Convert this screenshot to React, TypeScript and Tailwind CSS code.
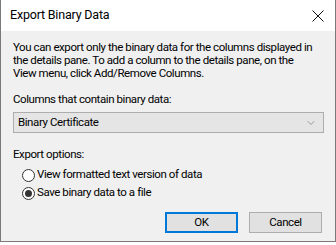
import { ChevronDown } from "lucide-react";

function Radio({ checked, label }: { checked?: boolean; label: string }) {
  return (
    <label className="flex h-[18px] items-center">
      <span className="flex h-[13px] w-[13px] items-center justify-center rounded-full border border-[#333] bg-white">
        {checked && <span className="h-[7px] w-[7px] rounded-full bg-[#333]" />}
      </span>
      <span className="ml-[2px]">{label}</span>
    </label>
  );
}

export default function App() {
  return (
    <div className="h-[245px] w-[336px] bg-white font-['Roboto',Arial,sans-serif] text-[11.5px] tracking-[-0.42px] text-black">
      <div className="flex h-[242px] flex-col border-x border-b border-[#7a7a7a]">
        <div className="flex h-[31px] items-center justify-between bg-white pl-[9px] pr-[10px]">
          <span className="text-[12.5px] tracking-[-0.2px]">Export Binary Data</span>
          <svg width="12" height="12" viewBox="0 0 12 12" className="mr-[1px]">
            <path d="M0.5 0.5 L11.5 11.5 M11.5 0.5 L0.5 11.5" stroke="#111" strokeWidth="1" />
          </svg>
        </div>
        <div className="flex flex-1 flex-col bg-[#f0f0f0] px-[12px] pt-[10px]">
          <p className="whitespace-nowrap leading-[13px]">
            You can export only the binary data for the columns displayed in
            <br />
            the details pane. To add a column to the details pane, on the
            <br />
            View menu, click Add/Remove Columns.
          </p>
          <div className="mt-[13px] leading-[13px]">Columns that contain binary data:</div>
          <div className="mt-[6px] flex h-[21px] w-[311px] items-center justify-between border border-[#adadad] bg-[#e5e5e5] pl-[4px] pr-[6px]">
            <span>Binary Certificate</span>
            <ChevronDown size={12} strokeWidth={1.2} className="text-[#666]" />
          </div>
          <div className="mt-[15px] leading-[13px]">Export options:</div>
          <div className="ml-[9px] mt-[5px] flex flex-col">
            <Radio label="View formatted text version of data" />
            <Radio checked label="Save binary data to a file" />
          </div>
          <div className="mt-[10px] flex justify-end gap-[11px] pr-[1px]">
            <button className="h-[21px] w-[73px] border-2 border-[#0078d7] bg-[#e1e1e1]">OK</button>
            <button className="h-[21px] w-[73px] border border-[#adadad] bg-[#e1e1e1]">Cancel</button>
          </div>
        </div>
      </div>
    </div>
  );
}
